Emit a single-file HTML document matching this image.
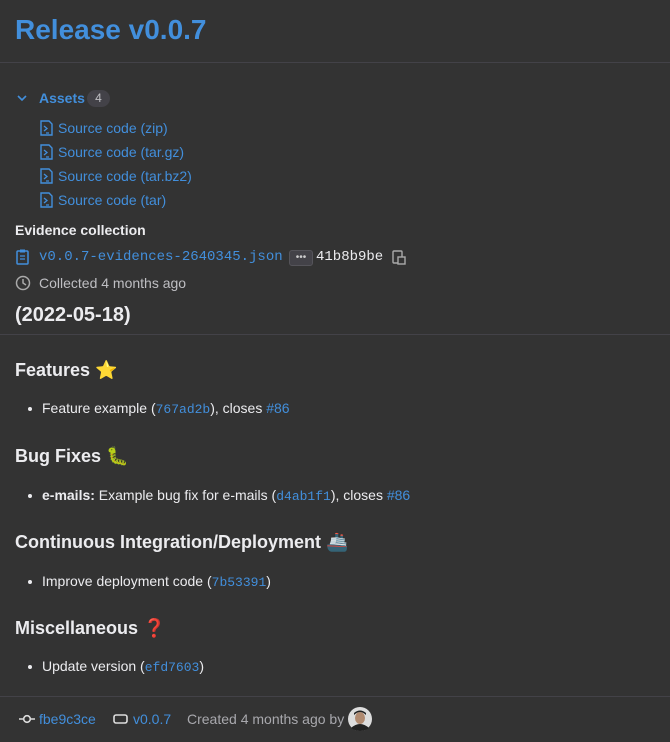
<!DOCTYPE html>
<html><head><meta charset="utf-8"><style>
body{margin:0;background:#333;width:670px;height:742px;overflow:hidden;font-family:"Liberation Sans",sans-serif;color:#ececef;position:relative}
.a{position:absolute;white-space:nowrap}
.blue{color:#428fdc}
.mono{font-family:"Liberation Mono",monospace}
.hr{position:absolute;left:0;right:0;height:1px;background:#434248}
.li{position:absolute;left:42px;font-size:14px;white-space:nowrap}
.li:before{content:"";position:absolute;left:-14px;top:7px;width:4px;height:4px;border-radius:50%;background:#ececef}
.h2{position:absolute;left:15px;font-size:18px;font-weight:bold;white-space:nowrap}
.code{font-family:"Liberation Mono",monospace;color:#428fdc;font-size:13px}
.f{display:flex;align-items:center;height:24px}
.f svg{margin-right:5px}
</style></head><body>
<div class="a blue" style="left:15px;top:14px;font-size:28px;font-weight:bold">Release v0.0.7</div>
<div class="hr" style="top:62px"></div>
<svg class="a" style="left:17px;top:94px" width="10" height="8"><path d="M1 2l4 4 4-4" stroke="#428fdc" stroke-width="1.6" fill="none"/></svg>
<div class="a blue" style="left:39px;top:90px;font-size:14px;font-weight:bold">Assets</div>
<div class="a" style="left:87px;top:90px;width:23px;height:17px;border-radius:9px;background:#434248;font-size:12px;text-align:center;line-height:17px;color:#bfbfc3">4</div>
<div class="a blue" style="left:40px;top:116px;font-size:14px">
<div class="f"><svg width="13" height="16"><path d="M1 1h8l3 3v11H1z" stroke="#428fdc" stroke-width="1.4" fill="none"/><path d="M4 6l3 2.5-3 2.5M6 13h3" stroke="#428fdc" stroke-width="1.3" fill="none"/></svg>Source code (zip)</div>
<div class="f"><svg width="13" height="16"><path d="M1 1h8l3 3v11H1z" stroke="#428fdc" stroke-width="1.4" fill="none"/><path d="M4 6l3 2.5-3 2.5M6 13h3" stroke="#428fdc" stroke-width="1.3" fill="none"/></svg>Source code (tar.gz)</div>
<div class="f"><svg width="13" height="16"><path d="M1 1h8l3 3v11H1z" stroke="#428fdc" stroke-width="1.4" fill="none"/><path d="M4 6l3 2.5-3 2.5M6 13h3" stroke="#428fdc" stroke-width="1.3" fill="none"/></svg>Source code (tar.bz2)</div>
<div class="f"><svg width="13" height="16"><path d="M1 1h8l3 3v11H1z" stroke="#428fdc" stroke-width="1.4" fill="none"/><path d="M4 6l3 2.5-3 2.5M6 13h3" stroke="#428fdc" stroke-width="1.3" fill="none"/></svg>Source code (tar)</div>
</div>
<div class="a" style="left:15px;top:222px;font-size:14px;font-weight:bold">Evidence collection</div>
<svg class="a" style="left:16px;top:249px" width="13" height="16"><rect x="1" y="2" width="11" height="13" rx="1" stroke="#428fdc" stroke-width="1.5" fill="none"/><rect x="4" y="0.5" width="5" height="3" fill="#428fdc"/><path d="M4 7h5M4 10h5" stroke="#428fdc" stroke-width="1.3"/></svg>
<div class="a code" style="left:39px;top:249px;font-size:14px">v0.0.7-evidences-2640345.json</div>
<div class="a" style="left:289px;top:250px;width:22px;height:14px;border:1px solid #55545a;border-radius:3px;background:#434248;color:#ccc;font-size:10px;text-align:center;line-height:13px">•••</div>
<div class="a mono" style="left:316px;top:249px;font-size:14px">41b8b9be</div>
<svg class="a" style="left:392px;top:249px" width="14" height="16"><rect x="1" y="2" width="9" height="12" rx="1" stroke="#aaa" stroke-width="1.4" fill="none"/><rect x="6" y="8" width="7" height="7" stroke="#aaa" stroke-width="1.4" fill="#333"/></svg>
<svg class="a" style="left:15px;top:275px" width="16" height="16"><circle cx="8" cy="8" r="6.5" stroke="#aaa" stroke-width="1.5" fill="none"/><path d="M8 4v4l3 2" stroke="#aaa" stroke-width="1.5" fill="none"/></svg>
<div class="a" style="left:39px;top:275px;font-size:14px;color:#bfbfc3">Collected 4 months ago</div>
<div class="a" style="left:15px;top:304px;font-size:20px;font-weight:bold">(2022-05-18)</div>
<div class="hr" style="top:334px"></div>
<div class="h2" style="top:360px">Features <span style="color:#f5c518">⭐</span></div>
<div class="li" style="top:400px">Feature example (<span class="code">767ad2b</span>), closes <span class="blue">#86</span></div>
<div class="h2" style="top:446px">Bug Fixes <span style="color:#8bc34a">🐛</span></div>
<div class="li" style="top:487px"><b>e-mails:</b> Example bug fix for e-mails (<span class="code">d4ab1f1</span>), closes <span class="blue">#86</span></div>
<div class="h2" style="top:532px">Continuous Integration/Deployment <span style="color:#4aa3df">🚢</span></div>
<div class="li" style="top:573px">Improve deployment code (<span class="code">7b53391</span>)</div>
<div class="h2" style="top:618px">Miscellaneous <span style="color:#e53935">❓</span></div>
<div class="li" style="top:658px">Update version (<span class="code">efd7603</span>)</div>
<div class="hr" style="top:696px"></div>
<svg class="a" style="left:19px;top:713px" width="16" height="12"><path d="M0 6h4M12 6h4" stroke="#ddd" stroke-width="1.6"/><circle cx="8" cy="6" r="3.3" stroke="#ddd" stroke-width="1.6" fill="none"/></svg>
<div class="a blue" style="left:39px;top:711px;font-size:14px">fbe9c3ce</div>
<svg class="a" style="left:113px;top:713px" width="16" height="12"><rect x="1" y="2" width="13" height="8" rx="2" stroke="#ddd" stroke-width="1.6" fill="none"/></svg>
<div class="a blue" style="left:133px;top:711px;font-size:14px">v0.0.7</div>
<div class="a" style="left:187px;top:711px;font-size:14px;color:#a8a8ad">Created 4 months ago by</div>
<svg class="a" style="left:348px;top:707px" width="24" height="24"><circle cx="12" cy="12" r="12" fill="#ddd"/><ellipse cx="12" cy="11" rx="5" ry="6" fill="#b08a70"/><path d="M6 8q6-6 12 0v-2q-6-5-12 0z" fill="#222"/><path d="M3 21q9-8 18 0q-9 6-18 0z" fill="#222"/></svg>
</body></html>
